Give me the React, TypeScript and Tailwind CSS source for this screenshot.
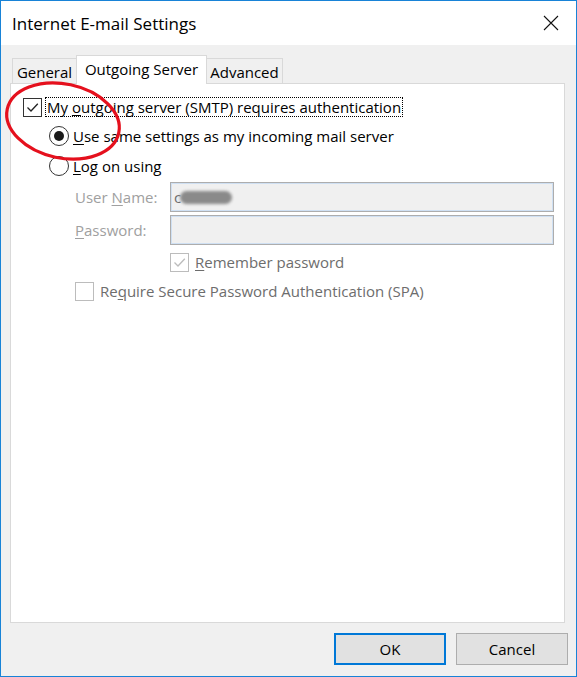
import React from "react";

function CheckBox({ checked = false, disabled = false }: { checked?: boolean; disabled?: boolean }) {
  return (
    <span
      className={`flex w-[19px] h-[19px] shrink-0 items-center justify-center border bg-white ${
        disabled ? "border-[#bcbcbc]" : "border-[#333333]"
      }`}
    >
      {checked && (
        <svg width="15" height="15" viewBox="0 0 15 15">
          <path
            d="M2.5 7.5 L6 11 L12.8 3.8"
            fill="none"
            stroke={disabled ? "#bcbcbc" : "#222222"}
            strokeWidth="1.3"
          />
        </svg>
      )}
    </span>
  );
}

function Radio({ selected = false }: { selected?: boolean }) {
  return (
    <span className="flex w-[20px] h-[20px] shrink-0 items-center justify-center rounded-full border border-[#333333] bg-white">
      {selected && <span className="block w-[10px] h-[10px] rounded-full bg-[#1a1a1a]" />}
    </span>
  );
}

export default function App() {
  return (
    <div className="relative w-[577px] h-[677px] border border-[#1883d7] bg-[#f0f0f0] flex flex-col font-['Open_Sans',sans-serif] text-[15px] text-black">
      {/* Title bar */}
      <div className="h-[44px] shrink-0 bg-white flex items-center justify-between pl-[11px] pr-[17px]">
        <span className="text-[17px] leading-none">Internet E-mail Settings</span>
        <svg width="16" height="16" viewBox="0 0 16 16">
          <path d="M1 1 L15 15 M15 1 L1 15" stroke="#111111" strokeWidth="1.1" fill="none" />
        </svg>
      </div>

      {/* Body */}
      <div className="flex-1 flex flex-col pl-[9px] pr-[8px] pt-[10px]">
        {/* Tabs */}
        <div className="relative z-10 flex items-end h-[28px] pl-[2px]">
          <div className="w-[64px] h-[25px] border-l border-t border-[#d9d9d9] flex items-center justify-center pt-[2px] leading-none">
            General
          </div>
          <div className="w-[131px] h-[29px] -mb-px bg-white border-l border-t border-r border-[#d9d9d9] flex items-center justify-center pb-[2px] leading-none">
            Outgoing Server
          </div>
          <div className="w-[76px] h-[25px] border-t border-r border-[#d9d9d9] flex items-center justify-center pt-[2px] leading-none">
            Advanced
          </div>
        </div>

        {/* Panel */}
        <div className="w-[555px] h-[540px] shrink-0 border border-[#d9d9d9] bg-white flex flex-col">
          <div className="mt-[13px] pl-[12px] h-[20px] flex items-center">
            <CheckBox checked />
            <span className="ml-[3px] h-[20px] px-[1px] flex items-center border border-dotted border-black">
              <span className="leading-none whitespace-nowrap">
                My <u className="underline-offset-2">o</u>utgoing server (SMTP) requires authentication
              </span>
            </span>
          </div>

          <div className="mt-[9px] pl-[38px] h-[20px] flex items-center gap-[4px]">
            <Radio selected />
            <span className="leading-none">
              <u className="underline-offset-2">U</u>se same settings as my incoming mail server
            </span>
          </div>

          <div className="mt-[10px] pl-[38px] h-[20px] flex items-center gap-[4px]">
            <Radio />
            <span className="leading-none">
              <u className="underline-offset-2">L</u>og on using
            </span>
          </div>

          <div className="mt-[6px] pl-[64px] flex items-center">
            <span className="w-[95px] text-[#a0a0a0] leading-none">
              User <u className="underline-offset-2">N</u>ame:
            </span>
            <div className="w-[384px] h-[30px] border border-[#adadad] bg-[#f0f0f0] shadow-[inset_0_0_0_1px_#cfe0f3] flex items-center pl-[3px]">
              <span className="text-[#6d6d6d] leading-none">c</span>
              <span className="ml-[-1px] block w-[52px] h-[13px] rounded-full bg-[#8a8a8a] blur-[1.5px]" />
            </div>
          </div>

          <div className="mt-[3px] pl-[64px] flex items-center">
            <span className="w-[95px] text-[#a0a0a0] leading-none">
              <u className="underline-offset-2">P</u>assword:
            </span>
            <div className="w-[384px] h-[30px] border border-[#adadad] bg-[#f0f0f0] shadow-[inset_0_0_0_1px_#cfe0f3]" />
          </div>

          <div className="mt-[7px] pl-[159px] h-[20px] flex items-center gap-[6px]">
            <CheckBox checked disabled />
            <span className="text-[#6d6d6d] leading-none">
              <u className="underline-offset-2">R</u>emember password
            </span>
          </div>

          <div className="mt-[9px] pl-[64px] h-[20px] flex items-center gap-[6px]">
            <CheckBox disabled />
            <span className="text-[#6d6d6d] leading-none">
              Re<u className="underline-offset-2">q</u>uire Secure Password Authentication (SPA)
            </span>
          </div>
        </div>

        {/* Buttons */}
        <div className="mt-[10px] flex justify-end gap-[10px]">
          <button className="w-[112px] h-[32px] border-2 border-[#0078d7] bg-[#e1e1e1] leading-none">OK</button>
          <button className="w-[112px] h-[32px] border border-[#adadad] bg-[#e1e1e1] leading-none">Cancel</button>
        </div>
      </div>

      {/* Red hand-drawn annotation */}
      <svg className="absolute left-0 top-0 pointer-events-none" width="577" height="677">
        <ellipse
          cx="62"
          cy="120"
          rx="57"
          ry="37"
          transform="rotate(12 62 120)"
          fill="none"
          stroke="#e5101d"
          strokeWidth="3.2"
        />
      </svg>
    </div>
  );
}
